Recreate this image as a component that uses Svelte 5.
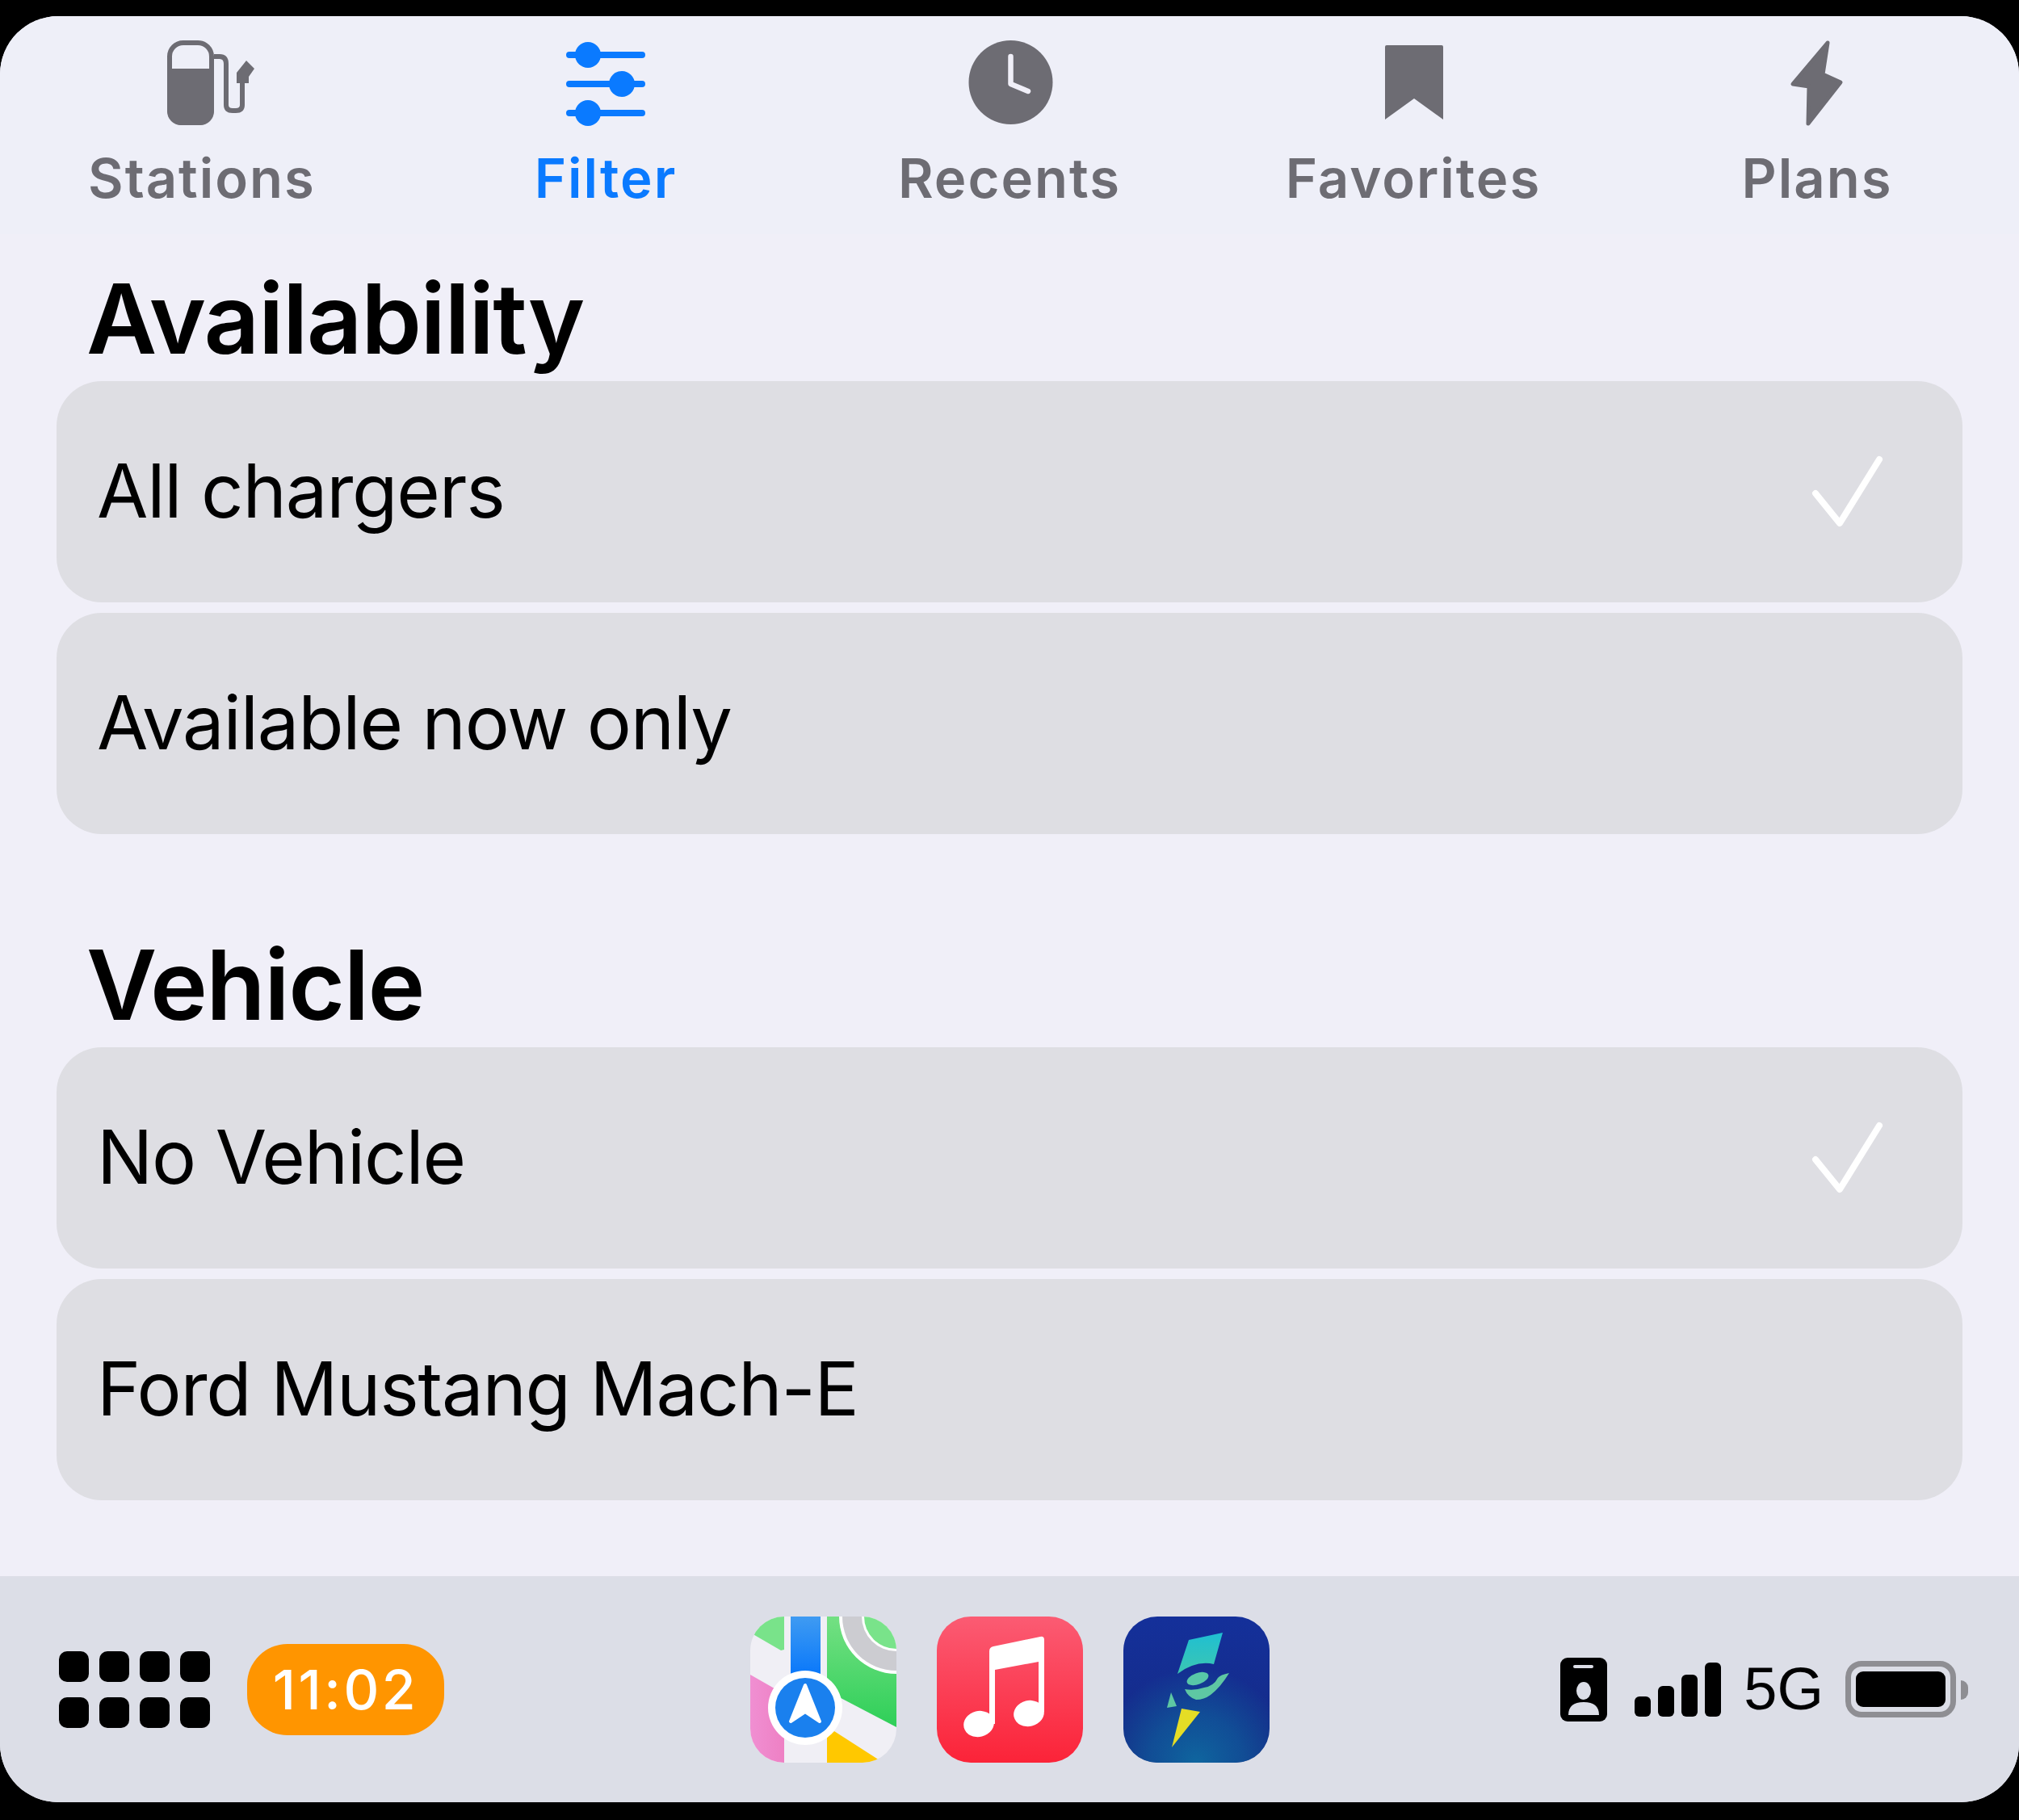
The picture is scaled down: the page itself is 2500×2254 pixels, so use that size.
<script>
  const tabs = [
    { key: 'stations', label: 'Stations' },
    { key: 'filter', label: 'Filter', active: true },
    { key: 'recents', label: 'Recents' },
    { key: 'favorites', label: 'Favorites' },
    { key: 'plans', label: 'Plans' }
  ];

  const sections = [
    { title: 'Availability', rows: [{ label: 'All chargers', checked: true }, { label: 'Available now only' }] },
    { title: 'Vehicle', rows: [{ label: 'No Vehicle', checked: true }, { label: 'Ford Mustang Mach-E' }] }
  ];
</script>

<div class="screen">
  <nav class="tabs">
    {#each tabs as tab}
      <div class="tab" class:active={tab.active}>
        <svg class="tab-icon" viewBox="0 0 140 120" aria-hidden="true">
          {#if tab.key === 'stations'}
            <rect x="30" y="9" width="52" height="99" rx="17" fill="none" stroke="currentColor" stroke-width="6"/>
            <path d="M27 41H85V94a17 17 0 0 1-17 17H44a17 17 0 0 1-17-17Z" fill="currentColor"/>
            <path d="M85 26H92Q100 26 100 35V86Q100 93 108 93H112Q120 93 120 86V55" fill="none" stroke="currentColor" stroke-width="6"/>
            <path d="M113 59V46L125 31L135 41L128 51V59Z" fill="currentColor"/>
          {:else if tab.key === 'filter'}
            <g fill="currentColor" stroke="currentColor">
              <path d="M25 24H115M25 60H115M25 96H115" stroke-width="8" stroke-linecap="round" fill="none"/>
              <circle cx="48" cy="24" r="16" stroke="none"/>
              <circle cx="90" cy="60" r="16" stroke="none"/>
              <circle cx="48" cy="96" r="16" stroke="none"/>
            </g>
          {:else if tab.key === 'recents'}
            <circle cx="71.5" cy="58" r="52" fill="currentColor"/>
            <path d="M71.5 26V60L93 69" fill="none" stroke="#f0eff8" stroke-width="6.5" stroke-linecap="round" stroke-linejoin="round"/>
          {:else if tab.key === 'favorites'}
            <path d="M35 14Q35 12 37 12H105Q107 12 107 14V104L71 78L35 104Z" fill="currentColor"/>
          {:else}
            <path d="M83 9L40 60L60 63L59 109L99 58L77 48Z" fill="currentColor" stroke="currentColor" stroke-width="5" stroke-linejoin="round"/>
          {/if}
        </svg>
        <span>{tab.label}</span>
      </div>
    {/each}
  </nav>

  <main class="content">
    {#each sections as section}
      <section>
        <h2>{section.title}</h2>
        <div class="rows">
          {#each section.rows as row}
            <div class="row">
              <span>{row.label}</span>
              {#if row.checked}
                <svg class="check" viewBox="0 0 90 90" aria-hidden="true">
                  <path d="M6 48L36 85L85 6" fill="none" stroke="#fff" stroke-width="8" stroke-linecap="round" stroke-linejoin="round"/>
                </svg>
              {/if}
            </div>
          {/each}
        </div>
      </section>
    {/each}
  </main>

  <footer class="dock">
    <div class="dock-left">
      <div class="grid-btn">
        {#each Array(8) as _}<i></i>{/each}
      </div>
      <div class="clock">11:02</div>
    </div>

    <div class="apps">
      <svg class="app" viewBox="0 0 181 181" aria-label="Maps">
        <defs>
          <clipPath id="squircle"><rect width="181" height="181" rx="42"/></clipPath>
          <linearGradient id="mapBlue" x1="0" y1="0" x2="0" y2="1"><stop offset="0" stop-color="#3f9bf2"/><stop offset="1" stop-color="#0a78fa"/></linearGradient>
          <linearGradient id="mapGreen" x1="0" y1="0" x2="0" y2="1"><stop offset="0" stop-color="#74e083"/><stop offset="1" stop-color="#2ecf58"/></linearGradient>
          <linearGradient id="mapPink" x1="0" y1="0" x2="1" y2="0"><stop offset="0" stop-color="#f08fd2"/><stop offset="1" stop-color="#ee80c4"/></linearGradient>
          <linearGradient id="musicRed" x1="0" y1="0" x2="0" y2="1"><stop offset="0" stop-color="#fb5b73"/><stop offset="1" stop-color="#fb2338"/></linearGradient>
          <linearGradient id="evBg" x1="0" y1="0" x2="0" y2="1"><stop offset="0" stop-color="#14309a"/><stop offset="1" stop-color="#152a84"/></linearGradient>
          <radialGradient id="evGlow" cx="0.5" cy="1" r="0.65" fy="1"><stop offset="0" stop-color="#0f669f"/><stop offset="0.5" stop-color="#0f5c9c" stop-opacity="0.7"/><stop offset="1" stop-color="#0f5c9c" stop-opacity="0"/></radialGradient>
          <linearGradient id="evTeal" x1="0" y1="0" x2="0" y2="1"><stop offset="0" stop-color="#1fbfd2"/><stop offset="1" stop-color="#3cc6b2"/></linearGradient>
        </defs>
        <g clip-path="url(#squircle)">
          <rect width="181" height="181" fill="#f0eff5"/>
          <path d="M0 20V0H42V41L38 42Z" fill="#79e38a"/>
          <rect x="50" width="37" height="72" fill="url(#mapBlue)"/>
          <path d="M95 0H181V137L95 92Z" fill="url(#mapGreen)"/>
          <circle cx="181" cy="0" r="71" fill="#fff"/>
          <circle cx="181" cy="0" r="67" fill="#ccccd1"/>
          <circle cx="181" cy="0" r="43" fill="#fff"/>
          <circle cx="181" cy="0" r="40" fill="#79e38a"/>
          <path d="M0 72L42 96V181H0Z" fill="url(#mapPink)"/>
          <path d="M95 181V150L104 142L160 178L155 181Z" fill="#ffc800"/>
          <circle cx="68" cy="113" r="46" fill="#fff"/>
          <circle cx="68" cy="113" r="37" fill="#1a80ee"/>
          <path d="M68 85L50 130L68 118L86 130Z" fill="#fff" stroke="#fff" stroke-width="4" stroke-linejoin="round"/>
        </g>
      </svg>

      <svg class="app" viewBox="0 0 181 181" aria-label="Music">
        <rect width="181" height="181" rx="42" fill="url(#musicRed)"/>
        <g fill="#fff">
          <path d="M65 43Q65 38 70 37L128 25Q133 24 133 29V118H126V56L72 66V133H65Z"/>
          <ellipse cx="52" cy="133" rx="19" ry="16" transform="rotate(-14 52 133)"/>
          <ellipse cx="114" cy="120" rx="19" ry="16" transform="rotate(-14 114 120)"/>
        </g>
      </svg>

      <svg class="app" viewBox="0 0 181 181" aria-label="Electrify">
        <rect width="181" height="181" rx="42" fill="url(#evBg)"/>
        <rect width="181" height="181" rx="42" fill="url(#evGlow)"/>
        <path d="M81 29L123 20L112 59Q90 54 67 71Z" fill="url(#evTeal)"/>
        <ellipse cx="92" cy="77" rx="14" ry="7" transform="rotate(-20 92 77)" fill="#58c8a8"/>
        <path d="M131 70Q120 72 117 76Q112 86 100 88Q88 92 76 90Q80 100 90 103Q100 103 108 97Q120 88 131 70Z" fill="#5ec7a3"/>
        <path d="M59 94L66 111L54 113Z" fill="#5ec7a3"/>
        <path d="M72 114L95 118L60 162Z" fill="#e5dd25"/>
      </svg>
    </div>

    <div class="status">
      <svg class="badge" viewBox="0 0 58 79" aria-hidden="true">
        <rect width="58" height="79" rx="9" fill="#000"/>
        <rect x="16" y="9" width="25" height="4" rx="2" fill="#dcdee7"/>
        <ellipse cx="29" cy="41" rx="9" ry="11" fill="#dcdee7"/>
        <path d="M10 71Q10 55 29 55T48 71Z" fill="#dcdee7"/>
      </svg>
      <div class="signal">
        <i style="height:25px"></i><i style="height:38px"></i><i style="height:52px"></i><i style="height:67px"></i>
      </div>
      <span class="net">5G</span>
      <div class="battery"><div class="level"></div><div class="nub"></div></div>
    </div>
  </footer>
</div>

<style>
  :global(body) {
    background: #000;
  }

  .screen {
    box-sizing: border-box;
    margin-top: 20px;
    height: 2212px;
    display: flex;
    flex-direction: column;
    border-radius: 72px;
    overflow: hidden;
    background: #f0eff8;
    color: #000;
    font-family: Inter, "Liberation Sans", sans-serif;
  }

  .tabs {
    display: grid;
    grid-template-columns: repeat(5, 1fr);
    height: 270px;
    flex: none;
    background: #eeeff8;
  }

  .tab {
    display: flex;
    flex-direction: column;
    align-items: center;
    color: #6d6c73;
    font-size: 67px;
    font-weight: 600;
    letter-spacing: 2px;
    line-height: 80px;
  }

  .tab.active {
    color: #0a7aff;
  }

  .tab-icon {
    width: 140px;
    height: 120px;
    margin-top: 24px;
    margin-bottom: 17px;
  }

  .content {
    flex: 1;
    display: flex;
    flex-direction: column;
    gap: 122px;
    padding: 40px 70px 0;
  }

  h2 {
    margin: 0 0 0 37px;
    font-size: 120px;
    font-weight: 600;
    line-height: 130px;
    letter-spacing: -1.5px;
  }

  .rows {
    display: flex;
    flex-direction: column;
    gap: 13px;
    margin-top: 12px;
  }

  .row {
    box-sizing: border-box;
    height: 274px;
    display: flex;
    align-items: center;
    justify-content: space-between;
    padding: 0 98px 3px 50px;
    border-radius: 56px;
    background: #dedee3;
    font-size: 92px;
    letter-spacing: -1.2px;
  }

  .check {
    width: 90px;
    height: 90px;
  }

  .dock {
    height: 280px;
    flex: none;
    display: grid;
    grid-template-columns: 1fr auto 1fr;
    align-items: center;
    background: #dcdee7;
    padding: 0 67px;
  }

  .dock-left {
    display: flex;
    align-items: center;
    gap: 46px;
    margin-left: 6px;
  }

  .grid-btn {
    display: grid;
    grid-template-columns: repeat(4, 37px);
    grid-auto-rows: 38px;
    gap: 19px 13px;
  }

  .grid-btn i {
    background: #000;
    border-radius: 10px;
  }

  .clock {
    width: 244px;
    height: 113px;
    display: flex;
    align-items: center;
    justify-content: center;
    border-radius: 50px;
    background: #ff9500;
    color: #fff;
    font-size: 68px;
    font-weight: 500;
    letter-spacing: 3.5px;
  }

  .apps {
    display: flex;
    gap: 50px;
  }

  .app {
    width: 181px;
    height: 181px;
  }

  .status {
    display: flex;
    align-items: center;
    justify-self: end;
    margin-right: -5px;
  }

  .badge {
    width: 58px;
    height: 79px;
  }

  .signal {
    display: flex;
    align-items: flex-end;
    gap: 9px;
    height: 67px;
    margin-left: 34px;
  }

  .signal i {
    width: 20px;
    border-radius: 6px;
    background: #000;
  }

  .net {
    margin-left: 28px;
    font-size: 74px;
    font-family: "Liberation Sans", sans-serif;
    line-height: 1;
  }

  .battery {
    position: relative;
    box-sizing: border-box;
    width: 137px;
    height: 70px;
    margin-left: 27px;
    margin-right: 16px;
    padding: 6px;
    border: 7px solid #8e8e93;
    border-radius: 20px;
  }

  .level {
    height: 100%;
    border-radius: 9px;
    background: #000;
  }

  .nub {
    position: absolute;
    left: 136px;
    top: 17px;
    width: 9px;
    height: 24px;
    border-radius: 0 12px 12px 0;
    background: #8e8e93;
  }
</style>
